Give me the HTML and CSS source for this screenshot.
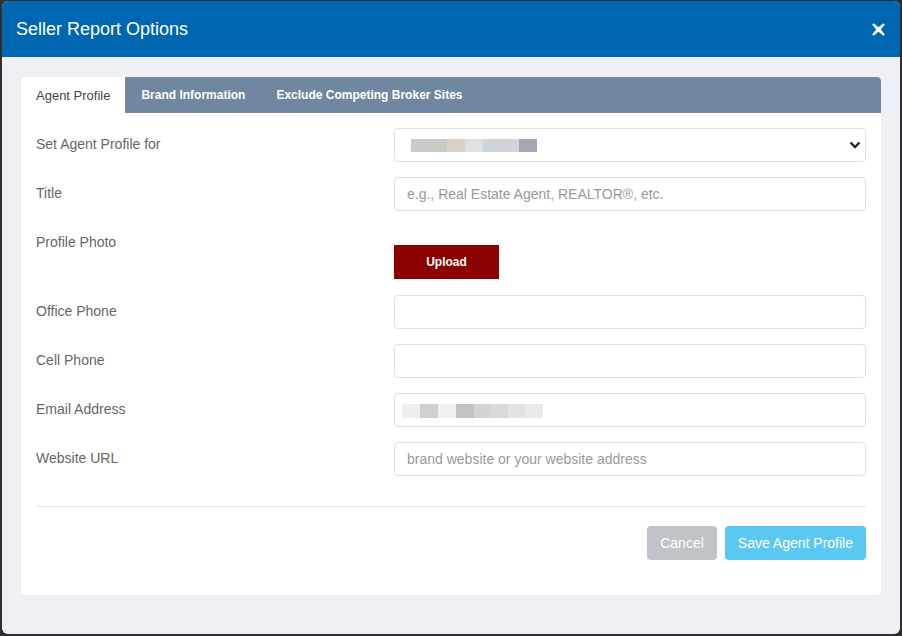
FILE: index.html
```html
<!DOCTYPE html>
<html lang="en">
<head>
    <meta charset="UTF-8">
    <meta name="viewport" content="width=device-width, initial-scale=1.0">
    <title>Seller Report Options</title>
    <link rel="stylesheet" href="styles.css">
</head>
<body>
    <div class="modal">
        <header class="modal-header">
            <h1>Seller Report Options</h1>
            <span class="close" title="Close">
                <svg width="13" height="13" viewBox="0 0 13 13">
                    <path d="M1.6 0.2 L6.5 4.2 L11.4 0.2 L12.8 1.6 L8.8 6.5 L12.8 11.4 L11.4 12.8 L6.5 8.8 L1.6 12.8 L0.2 11.4 L4.2 6.5 L0.2 1.6 Z" fill="#fff"/>
                </svg>
            </span>
        </header>

        <div class="modal-body">
            <div class="card">
                <nav class="tabs">
                    <a class="tab active" href="#">Agent Profile</a>
                    <a class="tab" href="#">Brand Information</a>
                    <a class="tab" href="#">Exclude Competing Broker Sites</a>
                </nav>

                <form class="form">
                    <div class="form-row">
                        <label>Set Agent Profile for</label>
                        <div class="field">
                            <div class="select">
                                <!-- name is blurred in the original -->
                                <span class="blur">
                                    <i class="s1"></i><i class="s2"></i><i class="s3"></i><i class="s4"></i><i class="s5"></i><i class="s6"></i><i class="s7"></i>
                                </span>
                                <span class="chevron">
                                    <svg width="12" height="8" viewBox="0 0 12 8">
                                        <path d="M1.5 1.5 L6 6 L10.5 1.5" fill="none" stroke="#222" stroke-width="2.4"/>
                                    </svg>
                                </span>
                            </div>
                        </div>
                    </div>
                    <div class="form-row">
                        <label>Title</label>
                        <div class="field">
                            <input type="text" placeholder="e.g., Real Estate Agent, REALTOR®, etc.">
                        </div>
                    </div>
                    <div class="form-row photo-row">
                        <label>Profile Photo</label>
                        <div class="field">
                            <button type="button" class="btn-upload">Upload</button>
                        </div>
                    </div>
                    <div class="form-row">
                        <label>Office Phone</label>
                        <div class="field"><input type="text"></div>
                    </div>
                    <div class="form-row">
                        <label>Cell Phone</label>
                        <div class="field"><input type="text"></div>
                    </div>
                    <div class="form-row">
                        <label>Email Address</label>
                        <div class="field">
                            <div class="input-static">
                                <span class="blur email">
                                    <i class="e1"></i><i class="e2"></i><i class="e3"></i><i class="e4"></i><i class="e5"></i><i class="e6"></i><i class="e7"></i><i class="e8"></i>
                                </span>
                            </div>
                        </div>
                    </div>
                    <div class="form-row">
                        <label>Website URL</label>
                        <div class="field">
                            <input type="text" placeholder="brand website or your website address">
                        </div>
                    </div>

                    <div class="form-footer">
                        <hr>
                        <div class="actions">
                            <button type="button" class="btn btn-cancel">Cancel</button>
                            <button type="button" class="btn btn-save">Save Agent Profile</button>
                        </div>
                    </div>
                </form>
            </div>
        </div>
    </div>
</body>
</html>
```

FILE: styles.css
```css
* {
    box-sizing: border-box;
}
body {
    margin: 0;
    padding: 1px 2px 2px 2px;
    background-color: #2e2f31;
    font-family: 'Liberation Sans', Arial, sans-serif;
}
.modal {
    width: 898px;
    height: 633px;
    background-color: #eff0f5;
    border-radius: 6px;
    overflow: hidden;
}
.modal-header {
    background-color: #0066b2;
    height: 56px;
    display: flex;
    align-items: center;
    justify-content: space-between;
    padding: 0 15px 0 14px;
}
.modal-header h1 {
    margin: 0;
    color: white;
    font-size: 18px;
    font-weight: normal;
}
.close {
    display: flex;
    cursor: pointer;
    margin-top: 1px;
}
.modal-body {
    padding: 20px 19px;
}
.card {
    background-color: white;
    border-radius: 4px;
    overflow: hidden;
    height: 518px;
}
.tabs {
    display: flex;
    height: 36px;
    background-color: #7186a0;
    border-radius: 4px 4px 0 0;
}
.tab {
    display: flex;
    align-items: center;
    padding: 0 15px 0 16px;
    color: white;
    font-size: 12px;
    font-weight: bold;
    text-decoration: none;
}
.tab.active {
    background-color: white;
    color: #444;
    font-size: 13px;
    font-weight: normal;
    padding: 0 15px;
}
.form {
    padding-top: 15px;
}
.form-row {
    display: grid;
    grid-template-columns: 358px 1fr;
    margin-bottom: 15px;
}
.form-row > * {
    padding: 0 15px;
}
.form-row label {
    padding-top: 6px;
    line-height: 20px;
    font-size: 14px;
    color: #666;
}
.photo-row {
    margin-bottom: 16px;
}
.photo-row .field {
    padding-top: 19px;
}
input,
.select,
.input-static {
    display: block;
    width: 100%;
    height: 34px;
    border: 1px solid #dedede;
    border-radius: 4px;
    padding: 0 12px;
    font-family: inherit;
    font-size: 14px;
    color: #555;
    background-color: white;
}
input::placeholder {
    color: #999;
}
.select {
    position: relative;
    display: flex;
    align-items: center;
    padding-left: 16px;
}
.input-static {
    display: flex;
    align-items: center;
    padding-left: 7px;
}
.chevron {
    position: absolute;
    right: 4px;
    top: 12px;
    display: flex;
}
.blur {
    display: flex;
    height: 13px;
    margin-top: 1px;
}
.blur i {
    display: block;
    width: 18px;
    height: 100%;
}
.blur.email {
    height: 14px;
    margin-top: 2px;
}
.s1 { background-color: #c9c9c9; }
.s2 { background-color: #c6cdc4; }
.s3 { background-color: #d8d1cc; }
.s4 { background-color: #dde2e0; }
.s5 { background-color: #cfd4db; }
.s6 { background-color: #d1d3d8; }
.s7 { background-color: #a5a7b5; }
.e1 { background-color: #eeeeee; }
.e2 { background-color: #d0d0d0; }
.e3 { background-color: #f0f0f0; }
.e4 { background-color: #c3c3c3; }
.e5 { background-color: #d3d3d3; width: 16px !important; }
.e6 { background-color: #d9d9d9; }
.e7 { background-color: #e3e3e3; }
.e8 { background-color: #eaeaea; width: 17px !important; }
.btn-upload {
    width: 105px;
    height: 34px;
    border: none;
    background-color: #8b0000;
    color: white;
    font-family: inherit;
    font-size: 12px;
    font-weight: bold;
    cursor: pointer;
}
.form-footer {
    padding: 0 15px 0 15px;
}
hr {
    margin: 30px 0 19px 0;
    border: none;
    border-top: 1px solid #e3e3e3;
    height: 1px;
    background-color: #f0f0f0;
}
.actions {
    display: flex;
    justify-content: flex-end;
    gap: 8px;
}
.btn {
    height: 34px;
    border: none;
    border-radius: 4px;
    color: white;
    font-family: inherit;
    font-size: 14px;
    padding: 0 13px;
    cursor: pointer;
}
.btn-cancel {
    background-color: #c0c4c8;
}
.btn-save {
    background-color: #5bc8f2;
}
```
